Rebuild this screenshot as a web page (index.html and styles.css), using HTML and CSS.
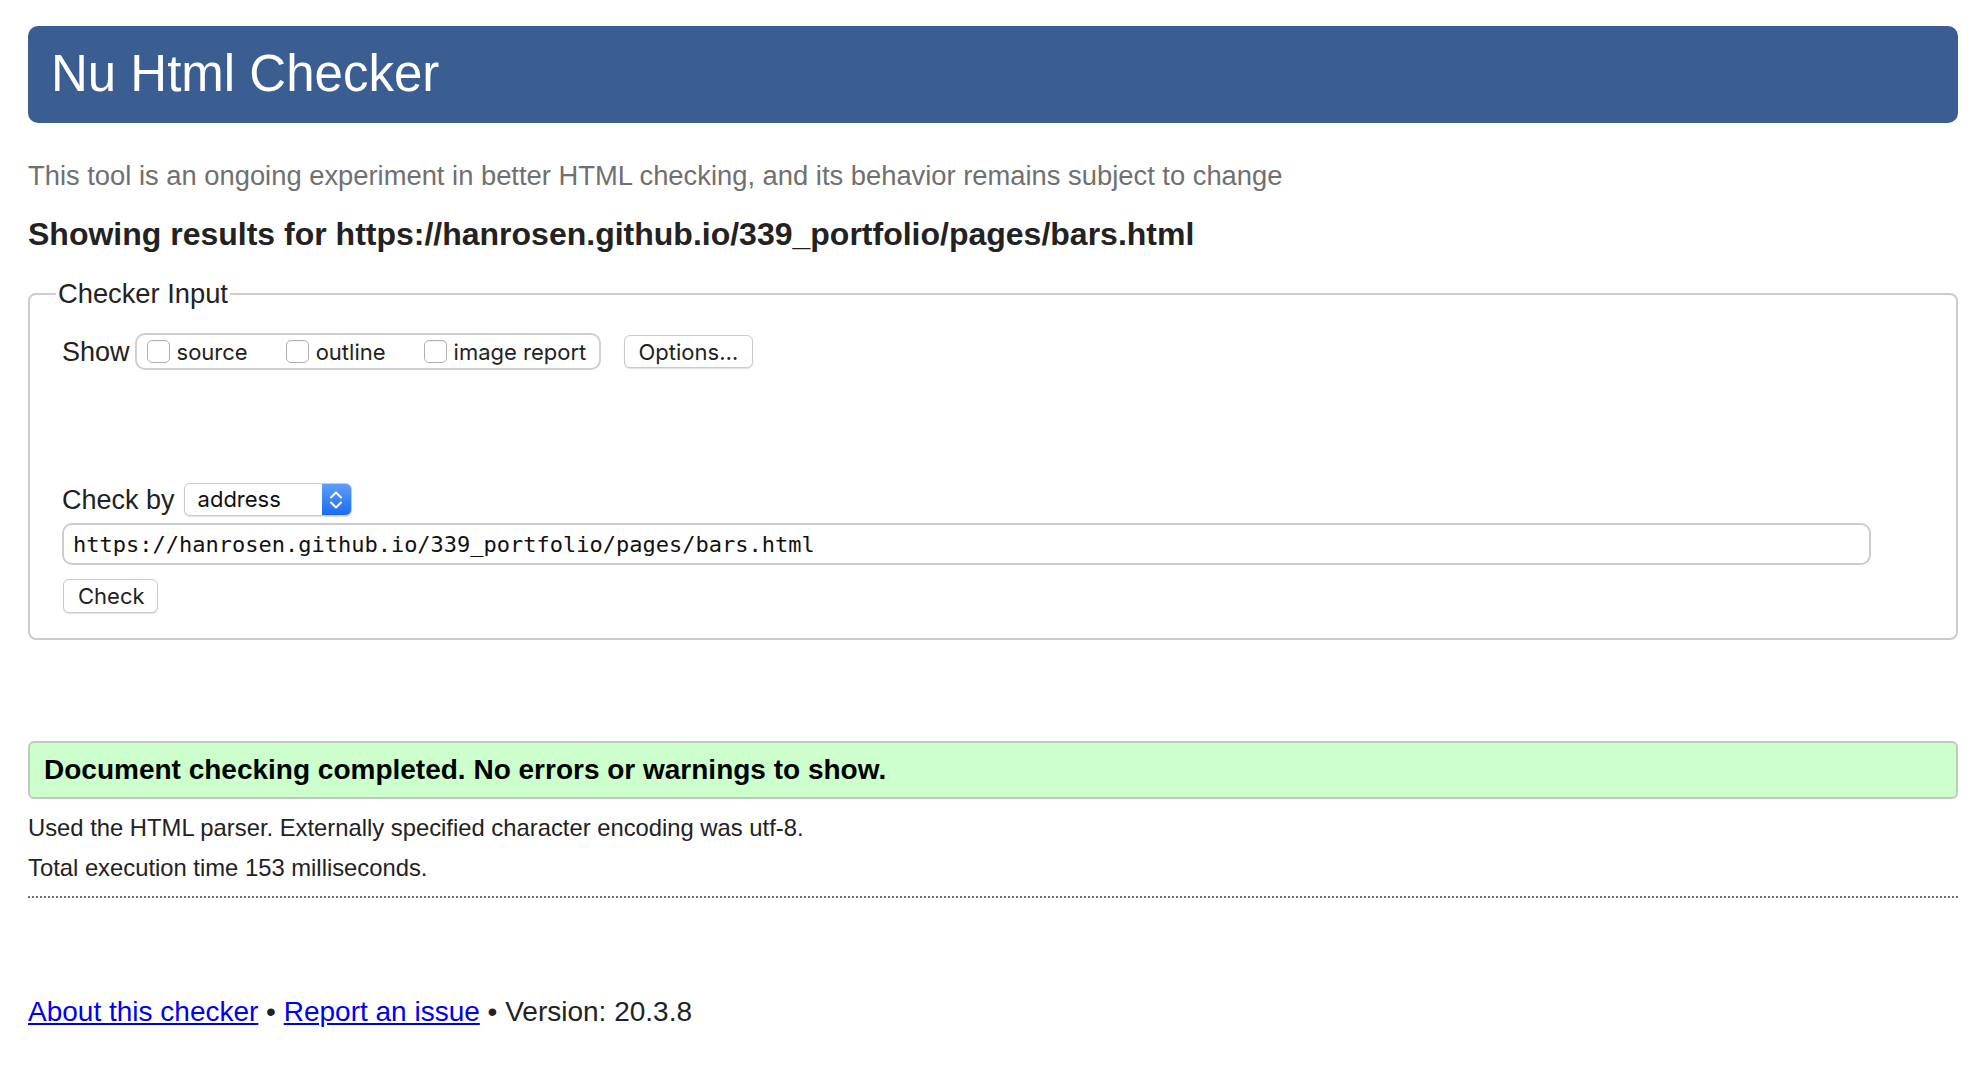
FILE: index.html
```html
<!DOCTYPE html>
<html lang="en">
<head>
<meta charset="utf-8">
<title>Showing results for https://hanrosen.github.io/339_portfolio/pages/bars.html - Nu Html Checker</title>
<link rel="stylesheet" href="styles.css">
</head>
<body>
<h1 class="masthead">Nu Html Checker</h1>
<p class="about">This tool is an ongoing experiment in better HTML checking, and its behavior remains subject to change</p>
<h2 class="results-title">Showing results for https://hanrosen.github.io/339_portfolio/pages/bars.html</h2>
<form class="checker-form">
  <fieldset class="checker-input">
    <legend class="checker-legend">Checker Input</legend>
    <div class="show-row">
      <span class="row-label row-label-show">Show</span>
      <div class="show-group">
        <label class="opt"><input type="checkbox" class="box"><span>source</span></label>
        <label class="opt"><input type="checkbox" class="box"><span>outline</span></label>
        <label class="opt"><input type="checkbox" class="box"><span>image report</span></label>
      </div>
      <button type="button" class="btn btn-options">Options…</button>
    </div>
    <div class="checkby-row">
      <span class="row-label row-label-check">Check by</span>
      <div class="select">
        <span class="select-value">address</span>
        <span class="stepper">
          <svg width="14" height="20" viewBox="0 0 14 20"><path d="M2 7.5 L7 2.5 L12 7.5 M2 12.5 L7 17.5 L12 12.5" fill="none" stroke="#fff" stroke-width="2" stroke-linecap="round" stroke-linejoin="round"/></svg>
        </span>
      </div>
    </div>
    <input class="url-field" type="text" value="https://hanrosen.github.io/339_portfolio/pages/bars.html">
    <button type="button" class="btn btn-check">Check</button>
  </fieldset>
</form>
<p class="success">Document checking completed. No errors or warnings to show.</p>
<p class="details details-first">Used the HTML parser. Externally specified character encoding was utf-8.</p>
<p class="details">Total execution time 153 milliseconds.</p>
<hr class="divider">
<p class="footer"><a href="#">About this checker</a> • <a href="#">Report an issue</a> • Version: 20.3.8</p>
</body>
</html>
```

FILE: styles.css
```css
html, body {
  background: #fff;
}
body {
  margin: 0;
  padding: 26px 28px 0;
  font-family: "Liberation Sans", Arial, sans-serif;
  color: #222;
}
.masthead {
  margin: 0;
  height: 97px;
  line-height: 95px;
  padding-left: 23px;
  background: #3a5e92;
  color: #fff;
  font-size: 51px;
  font-weight: normal;
  border-radius: 10px;
}
.about {
  margin: 37px 0 0;
  font-size: 27.35px;
  line-height: 32px;
  color: #707070;
}
.results-title {
  margin: 23px 0 0;
  font-size: 32px;
  line-height: 38px;
  font-weight: bold;
  color: #222;
}
.checker-form {
  margin: 26px 0 0;
}
.checker-input {
  margin: 0;
  padding: 24px 32px 25px 32px;
  border: 2px solid #cccccc;
  border-radius: 8px;
  min-width: 0;
}
.checker-legend {
  padding: 0 2px;
  margin-left: -6px;
  font-size: 27.3px;
  line-height: 30px;
  color: #222;
}
.show-row {
  display: flex;
  align-items: center;
  height: 37px;
}
.row-label {
  font-size: 27px;
  line-height: 30px;
  color: #222;
  white-space: nowrap;
}
.row-label-show {
  margin-right: 5px;
}
.row-label-check {
  margin-right: 9px;
}
.show-group {
  display: flex;
  align-items: center;
  flex-shrink: 0;
  box-sizing: border-box;
  width: 466px;
  height: 37px;
  padding: 0 10px;
  border: 2px solid #cfcfcf;
  border-radius: 10px;
}
.opt {
  display: flex;
  align-items: center;
  flex-shrink: 0;
  gap: 7px;
  margin-right: 38px;
  font-family: Inter, "Liberation Sans", sans-serif;
  font-size: 22px;
  color: #222;
  white-space: nowrap;
}
.opt:last-child {
  margin-right: 0;
}
.box {
  appearance: none;
  -webkit-appearance: none;
  flex-shrink: 0;
  margin: 0;
  width: 23px;
  height: 23px;
  box-sizing: border-box;
  border: 1px solid #b0b0b0;
  border-radius: 5px;
  background: #fff;
  box-shadow: inset 0 1px 1px rgba(0, 0, 0, 0.06);
}
.btn {
  display: block;
  box-sizing: border-box;
  margin: 0;
  height: 33px;
  padding: 0 14px;
  font-family: Inter, "Liberation Sans", sans-serif;
  font-size: 22px;
  color: #222;
  background: #fff;
  border: 1px solid #cacaca;
  border-radius: 6px;
  box-shadow: 0 1px 1px rgba(0, 0, 0, 0.12);
  white-space: nowrap;
}
.btn-options {
  flex-shrink: 0;
  margin-left: 23px;
  width: 129px;
}
.checkby-row {
  display: flex;
  align-items: center;
  margin-top: 113px;
  height: 33px;
}
.select {
  display: flex;
  box-sizing: border-box;
  width: 168px;
  height: 33px;
  border: 1px solid #cacaca;
  border-radius: 6px;
  overflow: hidden;
  box-shadow: 0 1px 1px rgba(0, 0, 0, 0.12);
  background: #fff;
}
.select-value {
  flex: 1;
  padding-left: 13px;
  font-family: Inter, "Liberation Sans", sans-serif;
  font-size: 22px;
  line-height: 31px;
  color: #111;
}
.stepper {
  width: 29px;
  display: flex;
  align-items: center;
  justify-content: center;
  background: linear-gradient(#5d9ef9, #1b6cf2);
}
.url-field {
  display: block;
  box-sizing: border-box;
  margin: 7px 0 0;
  width: 1809px;
  height: 42px;
  padding: 0 9px;
  border: 2px solid #cccccc;
  border-radius: 10px;
  font-family: "DejaVu Sans Mono", "Liberation Mono", monospace;
  font-size: 22px;
  color: #111;
  background: #fff;
  outline: none;
}
.btn-check {
  margin: 14px 0 0 1px;
  width: 95px;
  height: 34px;
  padding: 0 14px;
  text-align: left;
}
.success {
  margin: 101px 0 0;
  height: 58px;
  box-sizing: border-box;
  padding: 0 14px;
  line-height: 54px;
  font-size: 28px;
  font-weight: bold;
  color: #000;
  background: #ccffcc;
  border: 2px solid #bfcabf;
  border-radius: 6px;
}
.details {
  margin: 0;
  font-size: 23.8px;
  line-height: 40px;
  color: #222;
}
.details-first {
  margin-top: 9px;
}
.divider {
  margin: 8px 0 0;
  height: 0;
  border: 0;
  border-top: 2px dotted #707070;
}
.footer {
  margin: 97px 0 0;
  font-size: 28px;
  line-height: 34px;
  color: #222;
}
.footer a {
  color: #0000ee;
  text-decoration: underline;
}
```
